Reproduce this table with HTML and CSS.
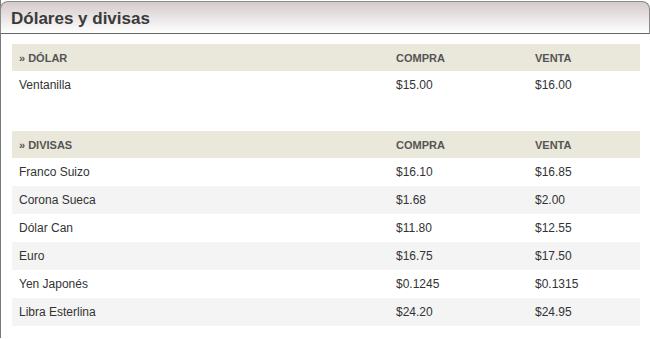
FILE: index.html
```html
<!DOCTYPE html>
<html lang="es">
<head>
<meta charset="utf-8">
<title>Dólares y divisas</title>
<link rel="stylesheet" href="styles.css">
</head>
<body>
<div class="panel">
  <div class="panel-head"><h2>Dólares y divisas</h2></div>
  <div class="panel-body">
    <div class="rates">
      <div class="row head"><span>» DÓLAR</span><span>COMPRA</span><span>VENTA</span></div>
      <div class="row"><span>Ventanilla</span><span>$15.00</span><span>$16.00</span></div>
    </div>
    <div class="rates">
      <div class="row head"><span>» DIVISAS</span><span>COMPRA</span><span>VENTA</span></div>
      <div class="row"><span>Franco Suizo</span><span>$16.10</span><span>$16.85</span></div>
      <div class="row alt"><span>Corona Sueca</span><span>$1.68</span><span>$2.00</span></div>
      <div class="row"><span>Dólar Can</span><span>$11.80</span><span>$12.55</span></div>
      <div class="row alt"><span>Euro</span><span>$16.75</span><span>$17.50</span></div>
      <div class="row"><span>Yen Japonés</span><span>$0.1245</span><span>$0.1315</span></div>
      <div class="row alt"><span>Libra Esterlina</span><span>$24.20</span><span>$24.95</span></div>
    </div>
  </div>
</div>
</body>
</html>
```
FILE: styles.css
```css
html, body {
  margin: 0;
  padding: 0;
  background: #fff;
}
body {
  font-family: "Liberation Sans", Arial, sans-serif;
  color: #333;
}
.panel {
  padding-top: 1px;
  height: 338px;
  border-left: 1px solid #7a7a7a;
  box-sizing: border-box;
}
.panel-head {
  height: 31px;
  margin-left: -1px;
  border: 1px solid #8a8a8a;
  border-bottom-color: #666;
  border-radius: 8px 8px 0 0;
  background: linear-gradient(to bottom, #d4caca 0%, #e8e2e3 45%, #ffffff 100%);
  display: flex;
  align-items: center;
  padding-left: 10px;
}
.panel-head h2 {
  margin: 0;
  font-size: 17px;
  font-weight: bold;
  color: #3a3a3a;
  line-height: 20px;
  position: relative;
  top: 1px;
}
.panel-body {
  padding: 10px 10px 0 11px;
  display: flex;
  flex-direction: column;
  gap: 32px;
}
.row {
  display: grid;
  grid-template-columns: 377px 139px 1fr;
  align-items: center;
  height: 28px;
  padding-left: 7px;
  font-size: 12px;
  color: #333;
}
.row.head {
  height: 27px;
  background: #e9e8da;
  font-size: 11px;
  font-weight: bold;
  color: #555;
}
.row.alt {
  background: #f4f4f4;
}
```
